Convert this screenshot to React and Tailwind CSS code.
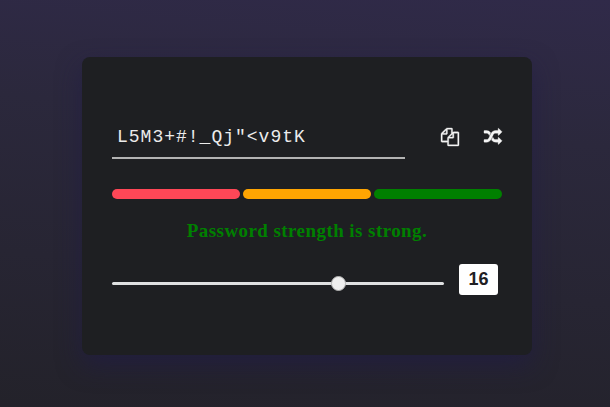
const COPY =
  "M1696 384q40 0 68 28t28 68v1216q0 40-28 68t-68 28h-960q-40 0-68-28t-28-68v-288h-544q-40 0-68-28t-28-68v-672q0-40 20-88t48-76l408-408q28-28 76-48t88-20h416q40 0 68 28t28 68v328q68-40 128-40h416zm-544 213l-299 299h299v-299zm-640-384l-299 299h299v-299zm196 647l316-316v-416h-384v416q0 40-28 68t-68 28h-416v640h512v-256q0-40 20-88t48-76zm956 804v-1152h-384v416q0 40-28 68t-68 28h-416v640h896z";
const SHUFFLE =
  "M666 481q-60 92-137 273-22-45-37-72.5t-40.5-63.5-51-56.5-63-35-81.5-14.5h-224q-14 0-23-9t-9-23v-192q0-14 9-23t23-9h224q250 0 410 225zm1126 799q0 14-9 23l-320 320q-9 9-23 9-13 0-22.5-9.5t-9.5-22.5v-192q-32 0-85 .5t-81 1-73-1-71-5-64-10.5-63-18.5-58-28.5-59-40-55-53.5-56-69.5q59-93 136-273 22 45 37 72.5t40.5 63.5 51 56.5 63 35 81.5 14.5h256v-192q0-14 9-23t23-9q12 0 24 10l319 319q9 9 9 23zm0-896q0 14-9 23l-320 320q-9 9-23 9-13 0-22.5-9.5t-9.5-22.5v-192h-256q-48 0-87 15t-69 45-51 61.5-45 77.5q-32 62-78 171-29 66-49.5 111t-54 105-64 100-74 83-90 68.5-106.5 42-128 16.5h-224q-14 0-23-9t-9-23v-192q0-14 9-23t23-9h224q48 0 87-15t69-45 51-61.5 45-77.5q32-62 78-171 29-66 49.5-111t54-105 64-100 74-83 90-68.5 106.5-42 128-16.5h256v-192q0-14 9-23t23-9q12 0 24 10l319 319q9 9 9 23z";

function IconButton({ label, path }) {
  return (
    <button aria-label={label} className="block text-[#f5f5f5]">
      <svg
        viewBox="0 0 1792 1792"
        className="h-[18px] w-[18px] overflow-visible"
        fill="currentColor"
        stroke="currentColor"
        strokeWidth="35"
      >
        <path d={path} />
      </svg>
    </button>
  );
}

export default function App() {
  return (
    <main className="flex h-screen w-full justify-center overflow-hidden bg-[linear-gradient(185deg,#302a49_0%,#2b283c_32%,#23222a_100%)] pt-[57px]">
      <section className="ml-1 flex h-[298px] w-[450px] flex-col rounded-lg bg-[#1e1f22] px-[30px] pt-[58px] shadow-[0_10px_25px_rgba(31,27,72,0.6)]">
        <div className="flex h-11 items-start">
          <div className="h-11 w-[293px] border-b-2 border-[#b3b3b3] pl-[5px] pt-[10px] font-['Courier_New','Liberation_Mono',monospace] text-[18px] leading-6 tracking-[1px] text-[#ececec]">
            {'L5M3+#!_Qj"<v9tK'}
          </div>
          <div className="ml-9 mt-[12.5px] flex gap-[25px]">
            <IconButton label="Copy password" path={COPY} />
            <IconButton label="Generate password" path={SHUFFLE} />
          </div>
        </div>
        <div className="mt-[30px] grid grid-cols-3 gap-[3px]">
          <div className="h-[10px] rounded-[5px] bg-[#ff4757]" />
          <div className="h-[10px] rounded-[5px] bg-[#ffa502]" />
          <div className="h-[10px] rounded-[5px] bg-[#008000]" />
        </div>
        <p className="mt-5 text-center font-['Liberation_Serif',serif] text-[19px] leading-6 font-bold tracking-[0.43px] text-[#008000]">
          Password strength is strong.
        </p>
        <div className="mt-[21px] flex h-[31px] items-center">
          <div className="mt-2 flex h-[3px] w-[332px] items-center rounded-full bg-[#dfe0e1]">
            <div className="ml-[219px] h-[15px] w-[15px] rounded-full border border-[#b2b2b2] bg-[#efefef]" />
          </div>
          <div className="ml-[15px] h-[31px] w-[39px] rounded-[3px] bg-white text-center font-['Liberation_Sans',sans-serif] text-[18px] leading-[31px] font-bold text-[#1f2023]">
            16
          </div>
        </div>
      </section>
    </main>
  );
}
